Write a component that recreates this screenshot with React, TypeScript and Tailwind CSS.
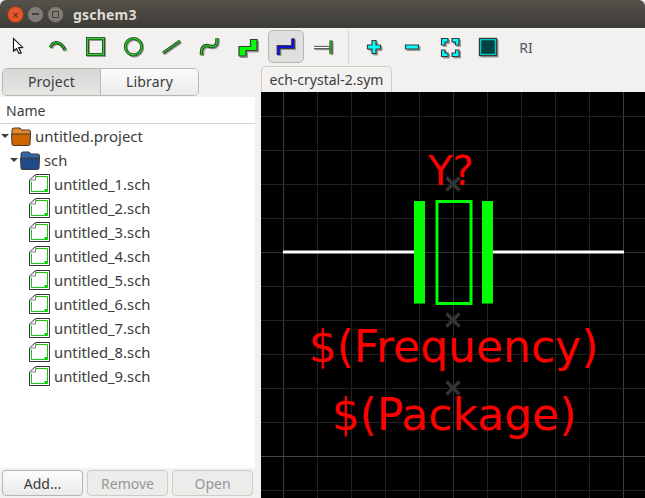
const UI_FONT = "font-['Noto_Sans','Open_Sans',sans-serif]";

const files = [
  "untitled_1.sch",
  "untitled_2.sch",
  "untitled_3.sch",
  "untitled_4.sch",
  "untitled_5.sch",
  "untitled_6.sch",
  "untitled_7.sch",
  "untitled_8.sch",
  "untitled_9.sch",
];

const DARK = "#3a3a3a";
const SHADOW = "#9a9896";

function ToolIcon({ children }: { children: React.ReactNode }) {
  return (
    <svg width="38" height="36" viewBox="0 0 38 36" fill="none">
      {children}
    </svg>
  );
}

// stroke in three layers: soft shadow, dark outline, bright core
function Stroke({ d, core, w = 1.4 }: { d: string; core: string; w?: number }) {
  return (
    <>
      <path d={d} transform="translate(1 1)" stroke={SHADOW} strokeWidth={w + 2} />
      <path d={d} stroke={DARK} strokeWidth={w + 1.8} />
      <path d={d} stroke={core} strokeWidth={w} />
    </>
  );
}

function Shape({ d, fill }: { d: string; fill: string }) {
  return (
    <>
      <path d={d} transform="translate(1.5 1.5)" fill={SHADOW} stroke={SHADOW} />
      <path d={d} fill={fill} stroke={DARK} strokeWidth="1.2" />
    </>
  );
}

const tools = [
  <ToolIcon key="select">
    <path d="M13.5 9.5 V22 L16.5 19.5 L19 24.5 L21 23.5 L18.6 18.6 L22.5 18.2 Z" transform="translate(1 1)" fill={SHADOW} />
    <path d="M13.5 9.5 V22 L16.5 19.5 L19 24.5 L21 23.5 L18.6 18.6 L22.5 18.2 Z" fill="#fff" stroke="#111" strokeWidth="1.1" />
  </ToolIcon>,
  <ToolIcon key="arc">
    <Stroke d="M12.5 18.5 C14.5 12 22 11 27 21" core="#12c312" />
  </ToolIcon>,
  <ToolIcon key="box">
    <path d="M11.5 9.5 H27.5 V25.5 H11.5 Z" transform="translate(1 1)" stroke={SHADOW} strokeWidth="3" />
    <path d="M11.5 9.5 H27.5 V25.5 H11.5 Z" stroke={DARK} strokeWidth="3" />
    <path d="M11.5 9.5 H27.5 V25.5 H11.5 Z" stroke="#1fe01f" strokeWidth="1.3" />
  </ToolIcon>,
  <ToolIcon key="circle">
    <circle cx="20.5" cy="18.7" r="8.2" stroke={SHADOW} strokeWidth="3" />
    <circle cx="19.5" cy="17.7" r="8.2" stroke={DARK} strokeWidth="3" />
    <circle cx="19.5" cy="17.7" r="8.2" stroke="#12d012" strokeWidth="1.6" />
  </ToolIcon>,
  <ToolIcon key="line">
    <Stroke d="M11 24 L28 12" core="#12d012" w={1.2} />
  </ToolIcon>,
  <ToolIcon key="path">
    <Stroke d="M11.5 26 C11 18 14 15.5 19 17 C24.5 18.5 27.5 17 27 9" core="#12d012" w={1.6} />
  </ToolIcon>,
  <ToolIcon key="net">
    <Shape d="M11 17.5 H22.5 V10.5 H29 V21.5 H18 V27 H11 Z" fill="#00ff00" />
  </ToolIcon>,
  <ToolIcon key="bus">
    <Stroke d="M12.5 26 V18 H27 V9.5" core="#1010e0" w={2} />
  </ToolIcon>,
  <ToolIcon key="pin">
    <Stroke d="M10 18.5 H25" core="#ffffff" w={1.4} />
    <path d="M27 12.5 V26" transform="translate(1 0)" stroke={SHADOW} strokeWidth="3" />
    <path d="M27 11.5 V25" stroke={DARK} strokeWidth="3.2" />
    <path d="M27 11.5 V25" stroke="#22e022" strokeWidth="1.2" />
  </ToolIcon>,
];

const viewTools = [
  <ToolIcon key="zoom-in">
    <Shape d="M17 11.5 H21 V16 H25.5 V20 H21 V24.5 H17 V20 H12.5 V16 H17 Z" fill="#00ffff" />
  </ToolIcon>,
  <ToolIcon key="zoom-out">
    <Shape d="M12.5 16 H25.5 V20 H12.5 Z" fill="#00ffff" />
  </ToolIcon>,
  <ToolIcon key="zoom-fit">
    <Shape d="M10.5 9.5 H17 V13 H14 V16 H10.5 Z" fill="#00ffff" />
    <Shape d="M21 9.5 H28 V16 H24.5 V13 H21 Z" fill="#00ffff" />
    <Shape d="M10.5 21 H14 V24 H17 V27.5 H10.5 Z" fill="#00ffff" />
    <Shape d="M24.5 21 H28 V27.5 H21 V24 H24.5 Z" fill="#00ffff" />
  </ToolIcon>,
  <ToolIcon key="zoom-box">
    <rect x="11.5" y="10.5" width="18" height="18" fill={SHADOW} />
    <rect x="10.5" y="9.5" width="17" height="17" fill="#004242" stroke={DARK} strokeWidth="1.4" />
    <rect x="11.7" y="10.7" width="14.6" height="14.6" stroke="#00e8e8" strokeWidth="1" />
  </ToolIcon>,
];

function Folder({ fill, tab }: { fill: string; tab: string }) {
  return (
    <svg width="22" height="21" viewBox="0 0 22 21" fill="none" className="shrink-0">
      <path d="M2 4 Q2 2 4 2 H10 L12 4 H19 Q20.5 4 20.5 6 V9 H2 Z" fill={tab} stroke="#3f3a32" />
      <path d="M1.5 8 H20.5 L20 18 Q20 19.5 18.5 19.5 H3.5 Q2 19.5 2 18 Z" fill={fill} stroke="#3f3a32" />
    </svg>
  );
}

function FileIcon() {
  return (
    <svg width="22" height="21" viewBox="0 0 22 21" fill="none" className="shrink-0">
      <path d="M6.5 0.5 H20.5 V19.5 H0.5 V6 Z" fill="#fff" stroke="#333" />
      <path d="M7 2.5 H18.5 V17.5 H2.5 V7.5" stroke="#14c814" strokeWidth="1" />
      <path d="M6.5 0.5 V6 H0.5" stroke="#888" />
      <rect x="15.5" y="15" width="3" height="2.5" fill="#14c814" />
    </svg>
  );
}

function Arrow() {
  return <span className="w-0 h-0 border-x-[4.5px] border-x-transparent border-t-[4.5px] border-t-[#3c3c3c] shrink-0" />;
}

const xMarks = [184, 320, 388];
const vLines = [283, 317, 351, 385, 419, 453, 487, 521, 555, 589, 623];
const hLines = [116, 150, 184, 218, 252, 286, 320, 354, 388, 422, 456, 490];

function SchematicCanvas() {
  // viewBox uses screen coordinates so the grid pitch (34px) reads directly
  return (
    <svg viewBox="261 92 384 406" width="384" height="406" className="block">
      <rect x="261" y="92" width="384" height="406" fill="#000" />
      {vLines.map((x) => (
        <line key={x} x1={x + 0.5} x2={x + 0.5} y1="92" y2="498" stroke={x === 283 || x === 623 ? "#3c3c3c" : x === 453 ? "#2e2e2e" : "#222"} />
      ))}
      {hLines.map((y) => (
        <line key={y} x1="261" x2="645" y1={y + 0.5} y2={y + 0.5} stroke={y === 456 ? "#444" : y === 252 ? "#333" : "#222"} />
      ))}
      <rect x="283" y="250.5" width="132" height="3" fill="#fff" />
      <rect x="492" y="250.5" width="132" height="3" fill="#fff" />
      <rect x="414" y="201" width="11" height="102.5" fill="#00ff00" />
      <rect x="482" y="201" width="11" height="102.5" fill="#00ff00" />
      <rect x="437" y="201.5" width="34" height="102" fill="none" stroke="#00ff00" strokeWidth="3" />
      {xMarks.map((y) => (
        <path key={y} d={`M446.5 ${y - 6.5} L459.5 ${y + 6.5} M459.5 ${y - 6.5} L446.5 ${y + 6.5}`} stroke="#333" strokeWidth="3.4" />
      ))}
      <g fill="#ff0000" fontFamily="'DejaVu Sans', sans-serif" textAnchor="middle">
        <text x="451" y="185" fontSize="40">Y?</text>
        <text x="453.5" y="362" fontSize="44">$(Frequency)</text>
        <text x="454" y="429.5" fontSize="44">$(Package)</text>
      </g>
    </svg>
  );
}

export default function App() {
  return (
    <div className={`w-[645px] h-[498px] overflow-hidden flex flex-col bg-[#f2f1f0] text-[14px] text-[#3c3c3c] ${UI_FONT}`}>
      {/* Title bar */}
      <div className="h-[28px] shrink-0 flex items-center pl-[7px] rounded-t-md bg-gradient-to-b from-[#55524b] to-[#3d3b36]">
        <div className="flex items-center gap-[3px]">
          <span className="w-[17px] h-[17px] rounded-full bg-[#e2562c] border border-[#8c3a20] flex items-center justify-center text-[11px] leading-none text-[#5a2010]">×</span>
          <span className="w-[17px] h-[17px] rounded-full bg-[#7f7d76] border border-[#4a4843] flex items-center justify-center">
            <span className="w-[7px] h-[2px] bg-[#45433e]" />
          </span>
          <span className="w-[17px] h-[17px] rounded-full bg-[#7f7d76] border border-[#4a4843] flex items-center justify-center">
            <span className="w-[7px] h-[7px] border border-[#45433e]" />
          </span>
        </div>
        <span className="ml-[9px] text-[14px] font-bold tracking-[0.2px] text-[#dfdbd2]">gschem3</span>
      </div>

      {/* Toolbar */}
      <div className="h-[38px] shrink-0 flex items-center">
        {tools.map((icon, i) =>
          i === 7 ? (
            <div key={i} className="w-[38px] h-[36px] relative">
              <span className="absolute left-[2px] top-[1px] w-[36px] h-[33px] rounded-[5px] bg-[#dfdfde] border border-[#b8b5b1]" />
              <span className="absolute left-0 top-0">{icon}</span>
            </div>
          ) : (
            <div key={i} className="w-[38px] h-[36px]">{icon}</div>
          )
        )}
        <div className="w-[1px] h-[36px] ml-[6px] mr-[6px] bg-[#dbd8d5]" />
        {viewTools.map((icon, i) => (
          <div key={i} className="w-[38px] h-[36px]">{icon}</div>
        ))}
        <div className="w-[38px] text-center text-[14px] text-[#4f5360]">RI</div>
      </div>

      <div className="flex-1 flex min-h-0">
        {/* Left panel */}
        <div className="w-[261px] shrink-0 flex flex-col">
          <div className="h-[31px] shrink-0 flex items-center pl-[2px]">
            <div className="w-[197px] h-[28px] flex rounded-[5px] border border-[#b9b5b0] overflow-hidden">
              <div className="w-[98px] flex items-center justify-center bg-gradient-to-b from-[#d6d6d5] to-[#e6e6e5] border-r border-[#b9b5b0] tracking-[0.2px]">Project</div>
              <div className="flex-1 flex items-center justify-center bg-gradient-to-b from-[#fbfbfb] to-[#ebeaea] tracking-[0.2px]">Library</div>
            </div>
          </div>
          <div className="w-[255px] flex-1 flex flex-col bg-white min-h-0">
            <div className="h-[27px] shrink-0 flex items-center pl-[6px] border-b border-[#d9d6d3]">Name</div>
            <div className="flex-1 text-[14.8px]">
              <div className="h-[24px] flex items-center pl-[1px]">
                <Arrow />
                <span className="ml-[1px]"><Folder fill="#cf6300" tab="#e58a2a" /></span>
                <span className="ml-[3px] text-[15px]">untitled.project</span>
              </div>
              <div className="h-[24px] flex items-center pl-[10px]">
                <Arrow />
                <span className="ml-[1px]"><Folder fill="#204a87" tab="#3465a4" /></span>
                <span className="ml-[3px]">sch</span>
              </div>
              {files.map((name) => (
                <div key={name} className="h-[24px] flex items-center pl-[29px] gap-[3px]">
                  <FileIcon />
                  <span>{name}</span>
                </div>
              ))}
            </div>
            <div className="h-[30px] shrink-0 flex items-center gap-[4px] pl-[2px] bg-[#f2f1f0]">
              <div className="w-[81px] h-[26px] flex items-center justify-center rounded-[4px] border border-[#b9b5b0] bg-gradient-to-b from-[#fcfcfc] to-[#ebeaea]">Add...</div>
              <div className="w-[81px] h-[26px] flex items-center justify-center rounded-[4px] border border-[#cfccc8] bg-[#ececeb] text-[#979797]">Remove</div>
              <div className="w-[81px] h-[26px] flex items-center justify-center rounded-[4px] border border-[#cfccc8] bg-[#ececeb] text-[#979797]">Open</div>
            </div>
          </div>
        </div>

        {/* Document area */}
        <div className="flex-1 flex flex-col min-w-0">
          <div className="h-[26px] shrink-0 flex items-end">
            <div className="w-[131px] h-[26px] flex items-center justify-center rounded-t-[5px] border border-b-0 border-[#cfcbc6]">ech-crystal-2.sym</div>
          </div>
          <SchematicCanvas />
        </div>
      </div>
    </div>
  );
}
